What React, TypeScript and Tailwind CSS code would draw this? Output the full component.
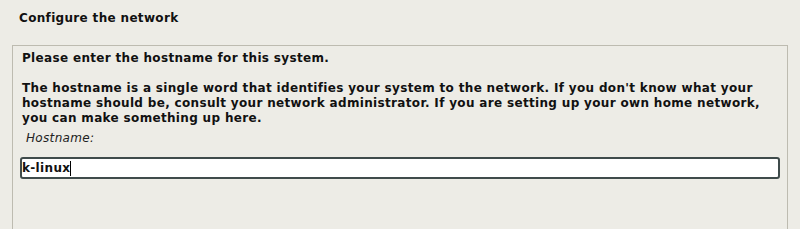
export default function App() {
  return (
    <div
      className="w-[800px] h-[229px] bg-[#edece6] overflow-hidden text-[#111] font-bold text-[12px] leading-[15px] tracking-[0.33px]"
      style={{ fontFamily: '"DejaVu Sans", sans-serif' }}
    >
      <div className="h-[45px] pl-[19px] pt-[11px]">Configure the network</div>
      <div className="mx-[12px] h-[200px] border border-[#bdbbb0] pl-[7px] pr-[7px] pt-[5px]">
        <p className="pl-[2px]">Please enter the hostname for this system.</p>
        <p className="pl-[2px] mt-[15px]">
          The hostname is a single word that identifies your system to the network. If you don't know what your
          hostname should be, consult your network administrator. If you are setting up your own home network,
          you can make something up here.
        </p>
        <p className="pl-[6px] mt-[5px] font-normal italic text-[#222]">Hostname:</p>
        <div className="mt-[11px] h-[22px] border-2 border-[#3f4b4b] rounded-[3px] bg-white flex items-center">
          <span>k-linux</span>
          <span className="w-px h-[15px] bg-black" />
        </div>
      </div>
    </div>
  );
}
